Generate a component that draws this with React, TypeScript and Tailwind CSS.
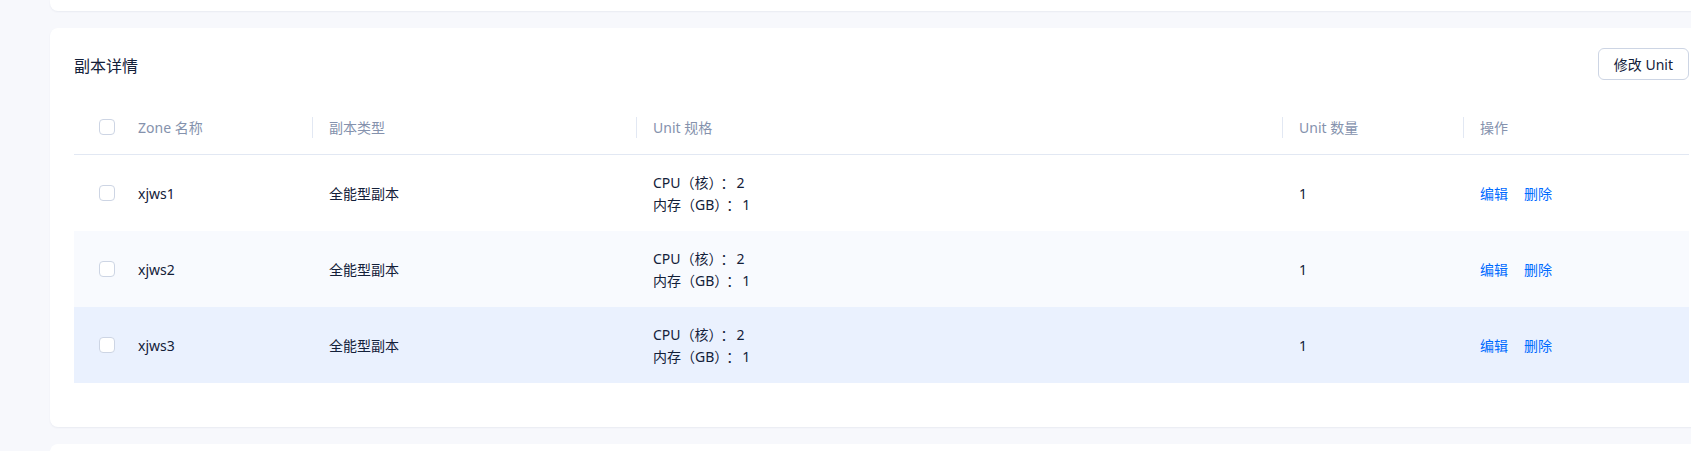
import React from 'react'

interface ReplicaRow {
  zone: string
  type: string
  cpu: number
  memory: number
  count: number
}

const rows: ReplicaRow[] = [
  { zone: 'xjws1', type: '全能型副本', cpu: 2, memory: 1, count: 1 },
  { zone: 'xjws2', type: '全能型副本', cpu: 2, memory: 1, count: 1 },
  { zone: 'xjws3', type: '全能型副本', cpu: 2, memory: 1, count: 1 },
]

const rowBg = ['bg-white', 'bg-[#f8fafe]', 'bg-[#eaf1fe]']

const gridCols = 'grid grid-cols-[48px_191px_324px_646px_181px_1fr]'

function Checkbox() {
  return <span className="block w-4 h-4 rounded-[4px] border border-[#cdd5e4] bg-white" />
}

function HeadCell({ label, divider = true }: { label: string; divider?: boolean }) {
  return (
    <div className="flex items-center justify-between pl-4">
      <span>{label}</span>
      {divider && <span className="w-px h-[21px] bg-[#e2e8f3]" />}
    </div>
  )
}

// colon is centred with space on both sides in the reference
function Colon() {
  return <span className="pl-[5px] pr-[2px]">：</span>
}

function App() {
  return (
    <div
      className="w-[1691px] h-[451px] overflow-hidden bg-[#f7f8fc] pl-[50px] flex flex-col gap-[17px]"
      style={{ fontFamily: '"Noto Sans", "Noto Sans CJK SC", sans-serif' }}
    >
      {/* card above, only its bottom edge shows */}
      <div className="w-[1663px] h-[11px] shrink-0 bg-white rounded-b-[8px] shadow-[0_1px_2px_rgba(20,40,80,0.06)]" />

      <div className="w-[1663px] h-[399px] shrink-0 bg-white rounded-[8px] shadow-[0_1px_2px_rgba(20,40,80,0.06)] px-6 pt-5">
        <div className="flex items-center justify-between h-8">
          <h3 className="text-[16px] leading-6 pt-[3px] text-[#132039] font-normal">副本详情</h3>
          <button className="h-8 px-[15px] rounded-[6px] border border-[#cdd5e4] bg-white text-[14px] text-[#132039]">
            修改 Unit
          </button>
        </div>

        <div className="mt-5 text-[14px]">
          <div className={`${gridCols} h-[55px] border-b border-[#e2e8f3] text-[#8592ad]`}>
            <div className="flex items-center pl-[25px]">
              <Checkbox />
            </div>
            <HeadCell label="Zone 名称" />
            <HeadCell label="副本类型" />
            <HeadCell label="Unit 规格" />
            <HeadCell label="Unit 数量" />
            <HeadCell label="操作" divider={false} />
          </div>

          {rows.map((row, i) => (
            <div key={row.zone} className={`${gridCols} h-[76px] text-[#132039] ${rowBg[i]}`}>
              <div className="flex items-center pl-[25px]">
                <Checkbox />
              </div>
              <div className="flex items-center pl-4">{row.zone}</div>
              <div className="flex items-center pl-4">{row.type}</div>
              <div className="flex flex-col justify-center pl-4 leading-[22px] pt-[2px]">
                <span>
                  CPU（核）<Colon />{row.cpu}
                </span>
                <span>
                  内存（GB）<Colon />{row.memory}
                </span>
              </div>
              <div className="flex items-center pl-4">{row.count}</div>
              <div className="flex items-center pl-4 gap-4 text-[#006aff]">
                <a className="cursor-pointer">编辑</a>
                <a className="cursor-pointer">删除</a>
              </div>
            </div>
          ))}
        </div>
      </div>

      <div className="w-[1663px] h-[40px] shrink-0 bg-white rounded-t-[8px]" />
    </div>
  )
}

export default App
